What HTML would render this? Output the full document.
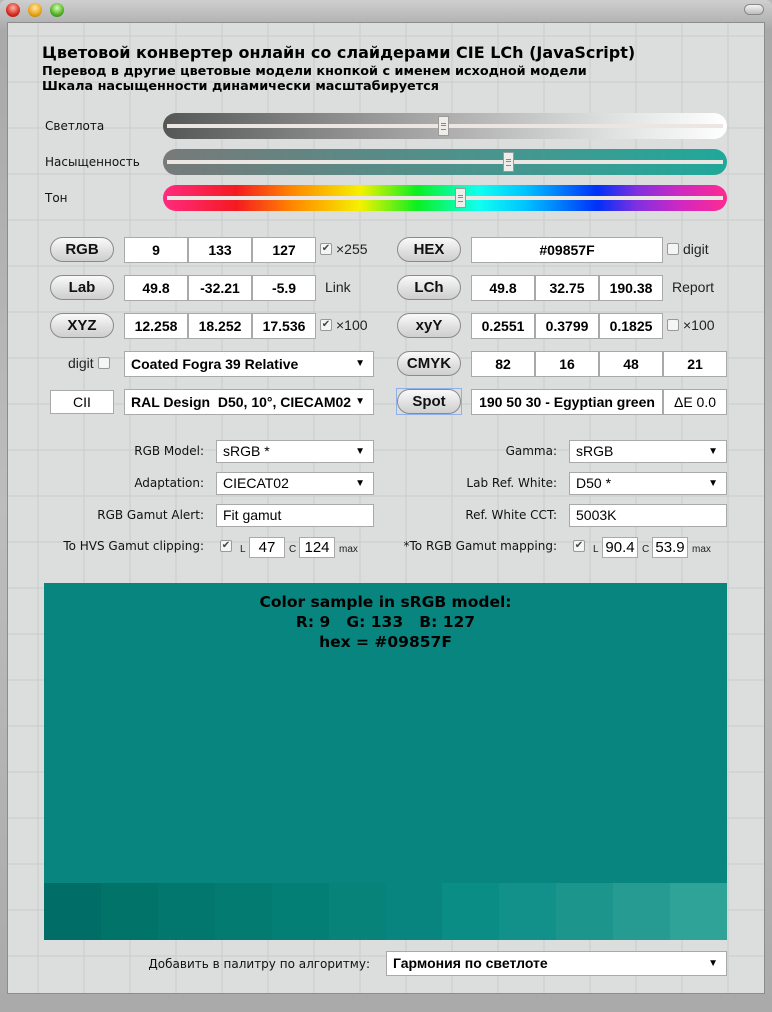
<!DOCTYPE html>
<html><head><meta charset="utf-8">
<style>
*{box-sizing:border-box;margin:0;padding:0}
body{width:772px;height:1012px;overflow:hidden;background:#b9b9b9;font-family:"Liberation Sans","DejaVu Sans",sans-serif;position:relative}
.frame{position:absolute;left:0;top:0;width:772px;height:1012px;background:linear-gradient(#cfcfcf,#a9a9a9 3%,#bdbdbd 50%,#aaaaaa);border-radius:6px 6px 0 0}
.inner{position:absolute;left:7px;top:22px;width:758px;height:972px;background-color:#dcdedd;border:1px solid #8c8c8c;
background-image:linear-gradient(90deg,rgba(205,207,206,.6) 2px,transparent 2px),linear-gradient(rgba(205,207,206,.6) 2px,transparent 2px);background-size:46px 46px;background-position:29px 12px}
.dot{position:absolute;top:3px;width:14px;height:14px;border-radius:50%}
.a{position:absolute}
.t1{left:42px;top:43px;font:bold 16px "DejaVu Sans",sans-serif;color:#000}
.t2{font:bold 12.8px "DejaVu Sans",sans-serif;color:#000}
.lbl{font:12px "DejaVu Sans",sans-serif;color:#111}
.sl{position:absolute;left:163px;width:564px;height:26px;border-radius:13px}
.sl::after{content:"";position:absolute;left:4px;right:4px;top:11px;height:4px;background:#ebe6e1}
.th{position:absolute;width:11px;height:20px;background:#efedea;border:1px solid #9d9994;z-index:2;top:3px}
.th::before{content:"";position:absolute;left:2px;right:2px;top:6px;height:5px;border-top:1px solid #888;border-bottom:1px solid #888}
.th::after{content:"";position:absolute;left:2px;right:2px;top:8px;border-top:1px solid #888}
.btn{position:absolute;width:64px;height:25px;border-radius:13px;border:1px solid #8a8a8a;background:linear-gradient(#fafafa,#dedede 60%,#cfcfcf);font:bold 15px "Liberation Sans",sans-serif;text-align:center;line-height:23px;color:#111}
.in{position:absolute;height:26px;background:#fff;border:1px solid #a9a9a9;font:bold 14px "Liberation Sans",sans-serif;text-align:center;line-height:24px;color:#000}
.sm{font:14px "Liberation Sans",sans-serif;color:#222}
.cb{position:absolute;width:12px;height:12px;border:1px solid #999;border-radius:2px;background:#f5f5f5;font-size:10px;line-height:10px;text-align:center;color:#444}
.sel{position:absolute;height:23px;background:#fff;border:1px solid #a9a9a9;font:14px "Liberation Sans",sans-serif;line-height:21px;padding-left:6px;color:#000;white-space:nowrap}
.sel::after{content:"▼";position:absolute;right:8px;top:0;font-size:10px}
.sel.n::after{content:""}
.rl{position:absolute;font:12px "DejaVu Sans",sans-serif;color:#111;text-align:right}
.small{font:10px "Liberation Sans",sans-serif;color:#222}
</style></head><body>
<div class="frame"></div>
<div class="dot" style="left:6px;background:radial-gradient(circle at 50% 35%,#ffb3a8,#d42a1e 60%,#8d1a12)"></div>
<div class="dot" style="left:28px;background:radial-gradient(circle at 50% 35%,#ffe7a0,#e8a316 60%,#9a6a09)"></div>
<div class="dot" style="left:50px;background:radial-gradient(circle at 50% 35%,#d8ffb0,#4fb124 60%,#2a6d10)"></div>
<div class="a" style="left:744px;top:4px;width:20px;height:11px;border-radius:6px;background:linear-gradient(#f4f4f4,#bdbdbd);border:1px solid #888"></div>
<div class="inner"></div>

<div class="a t1">Цветовой конвертер онлайн со слайдерами CIE LCh (JavaScript)</div>
<div class="a t2" style="left:42px;top:64px">Перевод в другие цветовые модели кнопкой с именем исходной модели</div>
<div class="a t2" style="left:42px;top:79px">Шкала насыщенности динамически масштабируется</div>

<div class="a lbl" style="left:45px;top:119px">Светлота</div>
<div class="a lbl" style="left:45px;top:155px">Насыщенность</div>
<div class="a lbl" style="left:45px;top:191px">Тон</div>
<div class="sl" style="top:113px;background:linear-gradient(90deg,#555756,#8a8b8a 30%,#b4b5b4 55%,#e0e1e1 80%,#fff)"><div class="th" style="left:275px"></div></div>
<div class="sl" style="top:149px;background:linear-gradient(90deg,#777a79,#5f8784 30%,#3f9a92 70%,#1fa89a)"><div class="th" style="left:340px"></div></div>
<div class="sl" style="top:185px;background:linear-gradient(90deg,#ff2a80,#f51a20 13%,#ff8800 23%,#f5f100 35%,#0af020 45%,#10fff0 56%,#00c6ff 64%,#0030f8 77%,#8030e0 84%,#d228c0 92%,#ff2a90)"><div class="th" style="left:292px"></div></div>

<div class="btn" style="left:50px;top:237px">RGB</div>
<div class="in" style="left:124px;top:237px;width:64px">9</div>
<div class="in" style="left:188px;top:237px;width:64px">133</div>
<div class="in" style="left:252px;top:237px;width:64px">127</div>
<div class="cb" style="left:320px;top:243px">✔</div><div class="a sm" style="left:336px;top:241px">×255</div>

<div class="btn" style="left:50px;top:275px">Lab</div>
<div class="in" style="left:124px;top:275px;width:64px">49.8</div>
<div class="in" style="left:188px;top:275px;width:64px">-32.21</div>
<div class="in" style="left:252px;top:275px;width:64px">-5.9</div>
<div class="a sm" style="left:325px;top:279px">Link</div>

<div class="btn" style="left:50px;top:313px">XYZ</div>
<div class="in" style="left:124px;top:313px;width:64px">12.258</div>
<div class="in" style="left:188px;top:313px;width:64px">18.252</div>
<div class="in" style="left:252px;top:313px;width:64px">17.536</div>
<div class="cb" style="left:320px;top:319px">✔</div><div class="a sm" style="left:336px;top:317px">×100</div>

<div class="a sm" style="left:68px;top:355px">digit</div><div class="cb" style="left:98px;top:357px"></div>
<div class="sel" style="left:124px;top:351px;width:250px;height:26px;line-height:24px;font-weight:bold">Coated Fogra 39 Relative</div>

<div class="in" style="left:50px;top:390px;width:64px;height:24px;font-weight:normal;line-height:22px">CII</div>
<div class="sel" style="left:124px;top:389px;width:250px;height:26px;line-height:24px;font-weight:bold">RAL Design&nbsp; D50, 10°, CIECAM02</div>

<div class="btn" style="left:397px;top:237px">HEX</div>
<div class="in" style="left:471px;top:237px;width:192px">#09857F</div>
<div class="cb" style="left:667px;top:243px"></div><div class="a sm" style="left:683px;top:241px">digit</div>

<div class="btn" style="left:397px;top:275px">LCh</div>
<div class="in" style="left:471px;top:275px;width:64px">49.8</div>
<div class="in" style="left:535px;top:275px;width:64px">32.75</div>
<div class="in" style="left:599px;top:275px;width:64px">190.38</div>
<div class="a sm" style="left:672px;top:279px">Report</div>

<div class="btn" style="left:397px;top:313px">xyY</div>
<div class="in" style="left:471px;top:313px;width:64px">0.2551</div>
<div class="in" style="left:535px;top:313px;width:64px">0.3799</div>
<div class="in" style="left:599px;top:313px;width:64px">0.1825</div>
<div class="cb" style="left:667px;top:319px"></div><div class="a sm" style="left:683px;top:317px">×100</div>

<div class="btn" style="left:397px;top:351px">CMYK</div>
<div class="in" style="left:471px;top:351px;width:64px">82</div>
<div class="in" style="left:535px;top:351px;width:64px">16</div>
<div class="in" style="left:599px;top:351px;width:64px">48</div>
<div class="in" style="left:663px;top:351px;width:64px">21</div>

<div class="a" style="left:396px;top:388px;width:66px;height:27px;border:1px solid #8fb0e8"></div>
<div class="btn" style="left:397px;top:389px">Spot</div>
<div class="in" style="left:471px;top:389px;width:192px">190 50 30 - Egyptian green</div>
<div class="in" style="left:663px;top:389px;width:64px;font-weight:normal">ΔE 0.0</div>

<div class="rl" style="left:60px;top:444px;width:144px">RGB Model:</div>
<div class="sel" style="left:216px;top:440px;width:158px">sRGB *</div>
<div class="rl" style="left:60px;top:476px;width:144px">Adaptation:</div>
<div class="sel" style="left:216px;top:472px;width:158px">CIECAT02</div>
<div class="rl" style="left:60px;top:508px;width:144px">RGB Gamut Alert:</div>
<div class="sel n" style="left:216px;top:504px;width:158px">Fit gamut</div>
<div class="rl" style="left:40px;top:539px;width:164px">To HVS Gamut clipping:</div>
<div class="cb" style="left:220px;top:540px">✔</div>
<div class="a small" style="left:240px;top:544px">L</div>
<div class="in" style="left:249px;top:537px;width:36px;height:21px;line-height:19px;font-weight:normal;font-size:15px">47</div>
<div class="a small" style="left:289px;top:544px">C</div>
<div class="in" style="left:299px;top:537px;width:36px;height:21px;line-height:19px;font-weight:normal;font-size:15px">124</div>
<div class="a small" style="left:339px;top:544px">max</div>

<div class="rl" style="left:400px;top:444px;width:157px">Gamma:</div>
<div class="sel" style="left:569px;top:440px;width:158px">sRGB</div>
<div class="rl" style="left:400px;top:476px;width:157px">Lab Ref. White:</div>
<div class="sel" style="left:569px;top:472px;width:158px">D50 *</div>
<div class="rl" style="left:400px;top:508px;width:157px">Ref. White CCT:</div>
<div class="sel n" style="left:569px;top:504px;width:158px">5003K</div>
<div class="rl" style="left:380px;top:539px;width:177px">*To RGB Gamut mapping:</div>
<div class="cb" style="left:573px;top:540px">✔</div>
<div class="a small" style="left:593px;top:544px">L</div>
<div class="in" style="left:602px;top:537px;width:36px;height:21px;line-height:19px;font-weight:normal;font-size:15px">90.4</div>
<div class="a small" style="left:642px;top:544px">C</div>
<div class="in" style="left:652px;top:537px;width:36px;height:21px;line-height:19px;font-weight:normal;font-size:15px">53.9</div>
<div class="a small" style="left:692px;top:544px">max</div>

<div class="a" style="left:44px;top:583px;width:683px;height:357px;background:#09857f"></div>
<div class="a" style="left:44px;top:592px;width:683px;text-align:center;font:bold 15.5px/20px 'DejaVu Sans',sans-serif;color:#000">Color sample in sRGB model:<br>R: 9&nbsp;&nbsp; G: 133&nbsp;&nbsp; B: 127<br>hex = #09857F</div>
<div class="a" style="left:44px;top:883px;width:683px;height:57px;display:flex">
<div style="flex:1;background:#006e66"></div><div style="flex:1;background:#017369"></div><div style="flex:1;background:#02776d"></div><div style="flex:1;background:#037b71"></div><div style="flex:1;background:#047f75"></div><div style="flex:1;background:#07837a"></div><div style="flex:1;background:#09857f"></div><div style="flex:1;background:#0a8d84"></div><div style="flex:1;background:#119189"></div><div style="flex:1;background:#1c958d"></div><div style="flex:1;background:#269b92"></div><div style="flex:1;background:#2fa398"></div>
</div>

<div class="rl" style="left:100px;top:957px;width:270px">Добавить в палитру по алгоритму:</div>
<div class="sel" style="left:386px;top:951px;width:341px;height:25px;line-height:23px;font-weight:bold">Гармония по светлоте</div>
</body></html>
